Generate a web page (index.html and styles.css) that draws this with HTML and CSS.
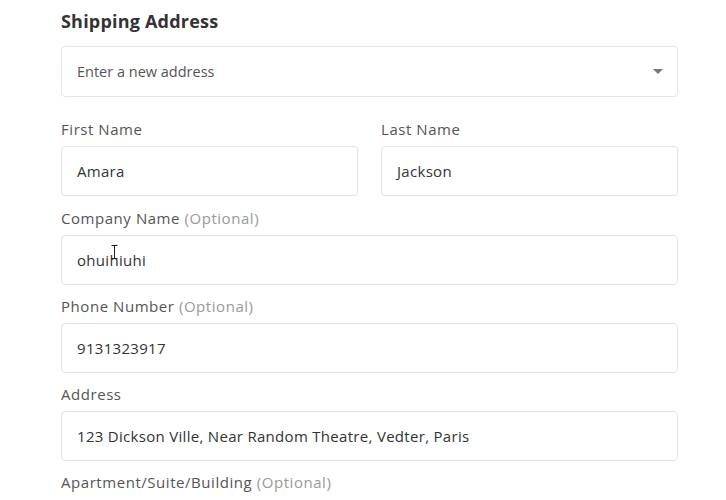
FILE: index.html
```html
<!DOCTYPE html>
<html>
<head>
<meta charset="utf-8">
<link rel="stylesheet" href="styles.css">
</head>
<body>
<div class="form">
  <h2 class="title">Shipping Address</h2>
  <div class="select">
    <span class="select-text">Enter a new address</span>
    <span class="caret"></span>
  </div>
  <div class="row first-row">
    <div class="field">
      <div class="label">First Name</div>
      <div class="input">Amara</div>
    </div>
    <div class="field">
      <div class="label">Last Name</div>
      <div class="input">Jackson</div>
    </div>
  </div>
  <div class="field">
    <div class="label">Company Name <span class="opt">(Optional)</span></div>
    <div class="input cursor-host">ohuihiuhi
      <svg class="ibeam" width="7" height="14" viewBox="0 0 7 14"><path d="M0.5 0.5h6M3.5 0.5v13M0.5 13.5h6" stroke="#222" stroke-width="1" fill="none"/></svg>
    </div>
  </div>
  <div class="field">
    <div class="label">Phone Number <span class="opt">(Optional)</span></div>
    <div class="input">9131323917</div>
  </div>
  <div class="field">
    <div class="label">Address</div>
    <div class="input">123 Dickson Ville, Near Random Theatre, Vedter, Paris</div>
  </div>
  <div class="field">
    <div class="label">Apartment/Suite/Building <span class="opt">(Optional)</span></div>
  </div>
</div>
</body>
</html>
```
FILE: styles.css
```css
* { box-sizing: border-box; }
html, body { margin: 0; padding: 0; background: #fff; }
body { font-family: "Open Sans", "Liberation Sans", sans-serif; color: #333; }
.form {
  width: 617px;
  margin-left: 61px;
  padding-top: 10px;
  display: flex;
  flex-direction: column;
}
.title {
  margin: 0;
  font-size: 18px;
  letter-spacing: 0.2px;
  font-weight: 700;
  color: #333;
  line-height: 22px;
  height: 36px;
}
.select {
  height: 51px;
  border: 1px solid #e6e6e6;
  border-radius: 4px;
  display: flex;
  align-items: center;
  justify-content: space-between;
  padding: 0 14px 0 15px;
}
.select-text { font-size: 14.5px; color: #555; }
.caret {
  width: 0; height: 0;
  border-left: 5px solid transparent;
  border-right: 5px solid transparent;
  border-top: 5px solid #777;
}
.row { display: flex; gap: 23px; }
.row .field { flex: 1; }
.row .input { margin-bottom: 10px; }
.first-row { margin-top: 20px; }
.field { display: flex; flex-direction: column; }
.label {
  font-size: 15px;
  letter-spacing: 0.55px;
  color: #555;
  line-height: 20px;
  height: 29px;
  padding-top: 2px;
}
.opt { color: #999; }
.input {
  height: 50px;
  border: 1px solid #e3e3e3;
  border-radius: 4px;
  display: flex;
  align-items: center;
  padding: 0 15px;
  font-size: 15px;
  letter-spacing: 0.3px;
  color: #333;
  margin-bottom: 9px;
}
.cursor-host { position: relative; }
.ibeam { position: absolute; left: 49px; top: 9px; }
```
